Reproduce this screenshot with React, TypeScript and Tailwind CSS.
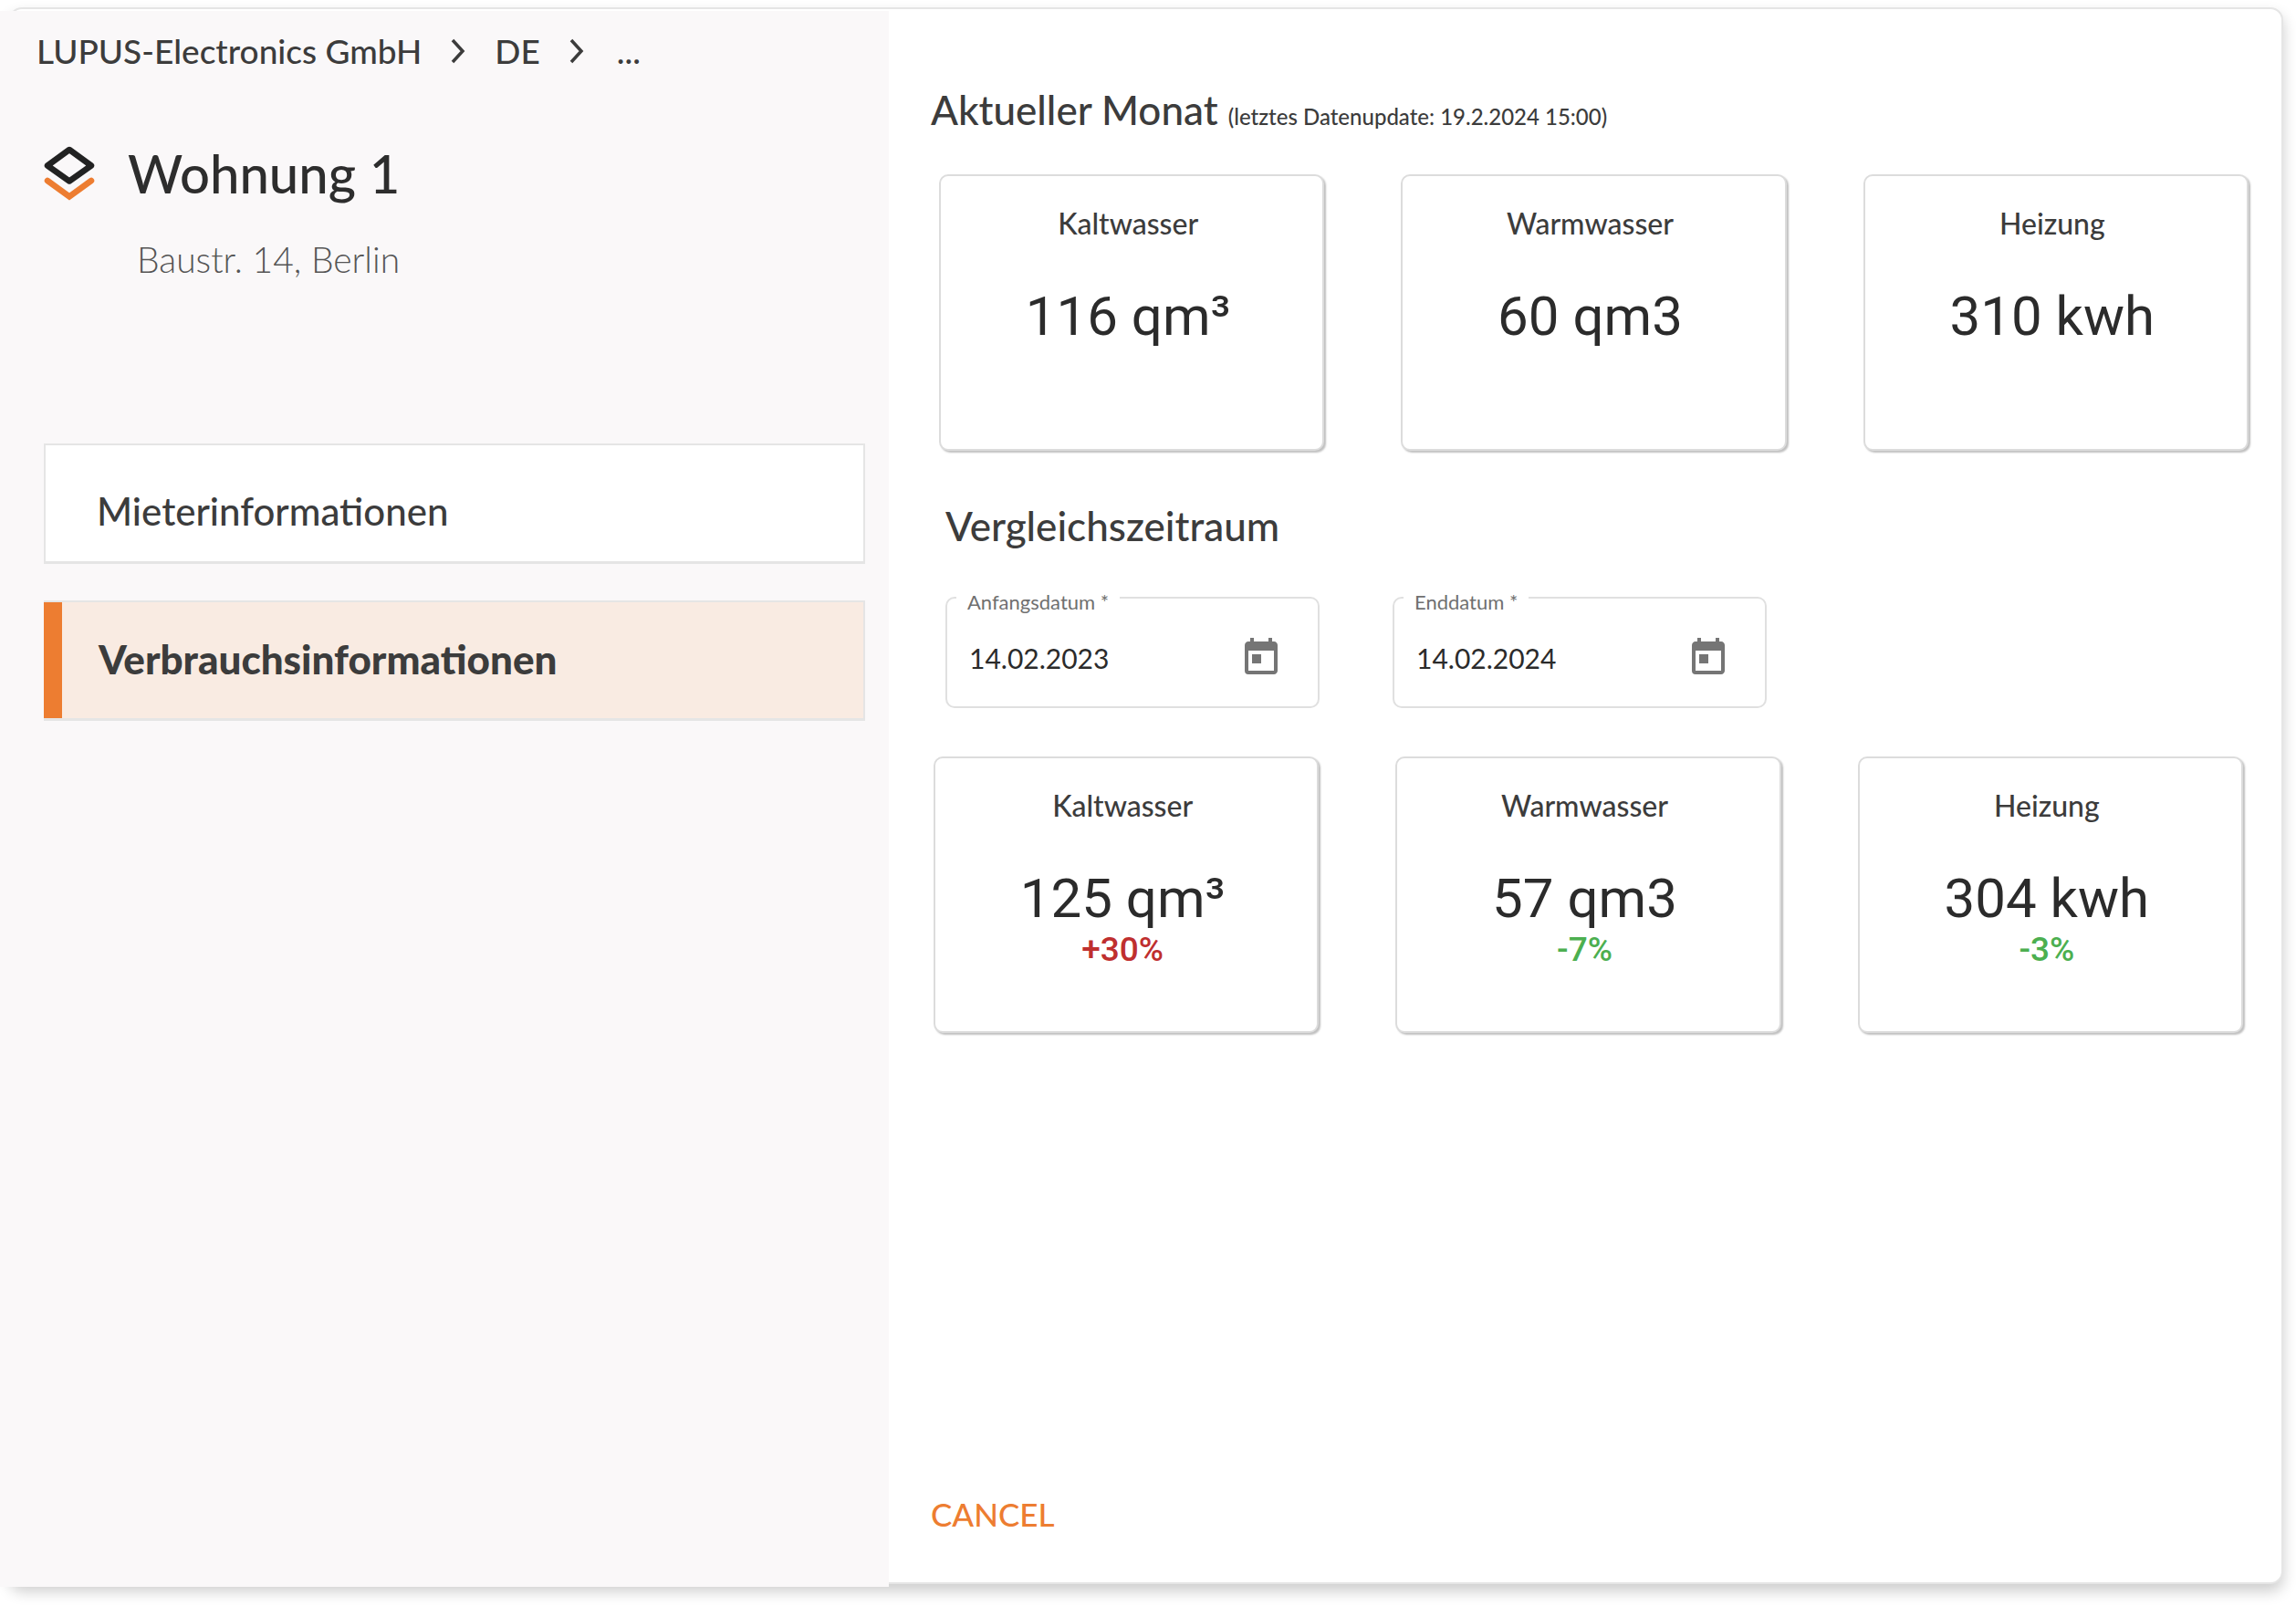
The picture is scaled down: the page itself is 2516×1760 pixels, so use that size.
import React from 'react';
import { MdToday } from 'react-icons/md';
import clsx from 'clsx';

interface Reading {
    label: string;
    value: string;
    delta?: string;
}

const currentMonth: Reading[] = [
    { label: 'Kaltwasser', value: '116 qm³' },
    { label: 'Warmwasser', value: '60 qm3' },
    { label: 'Heizung', value: '310 kwh' },
];

const comparison: Reading[] = [
    { label: 'Kaltwasser', value: '125 qm³', delta: '+30%' },
    { label: 'Warmwasser', value: '57 qm3', delta: '-7%' },
    { label: 'Heizung', value: '304 kwh', delta: '-3%' },
];

const Chevron = () => (
    <svg viewBox="0 0 16 28" className="h-7 w-4 flex-none" fill="none" stroke="#3c3c3c" strokeWidth="3.5" aria-hidden="true">
        <path d="M2 2 L13 14 L2 26" />
    </svg>
);

const UnitIcon = () => (
    <svg viewBox="0 0 56 60" className="h-[60px] w-14 flex-none" fill="none" strokeWidth="6.5" aria-hidden="true">
        <path d="M28 4 L52 21.5 L28 38.5 L4 21.5 Z" stroke="#222222" strokeLinejoin="round" />
        <path d="M4 38 L28 55.5 L52 38" stroke="#ed7d31" strokeLinecap="round" />
    </svg>
);

const NavItem = ({ label, active }: { label: string; active?: boolean }) => (
    <a
        href="#"
        className={clsx(
            'flex h-[132px] items-center border-2 border-b-[3px] border-[#e5e5e5] leading-[56px] text-[#3c3c3c]',
            active ? 'border-l-0 bg-[#f9ebe2] text-[44px] font-black' : 'bg-white pt-4 pl-14 text-[42px] font-medium'
        )}
    >
        {active && <span className="mr-10 w-5 self-stretch bg-[#ed7d31]" />}
        <span className={clsx(active && 'pb-1')}>{label}</span>
    </a>
);

const ReadingCard = ({ label, value, delta }: Reading) => (
    <div className="flex h-[303px] flex-col items-center rounded-[10px] border-2 border-[#dcdcdc] bg-white pt-8 pr-2 shadow-[2px_2px_2px_rgba(0,0,0,0.25)]">
        <h3 className="text-[32px] leading-10 font-medium text-[#3c3c3c]">{label}</h3>
        <p className="mt-[46px] font-[Roboto] text-[60px] leading-[72px] font-normal text-[#2b2b2b]">{value}</p>
        {delta && (
            <p className={clsx('font-[Roboto] text-[37px] leading-10 font-medium', delta.startsWith('+') ? 'text-[#bf2f2f]' : 'text-[#4caf50]')}>
                {delta}
            </p>
        )}
    </div>
);

const DateField = ({ id, label, value }: { id: string; label: string; value: string }) => (
    <div className="relative flex h-[122px] w-[410px] items-center rounded-[10px] border-2 border-[#e0e0e0] pt-3 pr-[38px] pl-6">
        <label htmlFor={id} className="absolute -top-[10px] left-[10px] bg-white px-3 text-[22px] leading-7 text-[#707070]">
            {label} *
        </label>
        <input id={id} defaultValue={value} className="min-w-0 flex-1 bg-transparent text-[30px] leading-10 text-[#2b2b2b] outline-none" />
        <button type="button" aria-label={`${label} wählen`} className="text-[#757575]">
            <MdToday size={48} />
        </button>
    </div>
);

export default function App() {
    return (
        <div className="flex min-h-screen bg-white pt-2 pr-[14px] pb-6 pl-[10px] font-[Lato,sans-serif]">
            <div className="grid flex-1 grid-cols-[481fr_763fr] rounded-[14px] border-2 border-[#e5e5e5] bg-white shadow-[0_8px_16px_rgba(0,0,0,0.2)]">
                <aside className="mt-[2px] -mb-[5px] -ml-3 bg-[#faf8f9] pt-5 pr-[26px] pl-12">
                    <nav aria-label="Breadcrumb" className="-ml-2 flex items-center text-[37px] leading-[48px] font-medium text-[#3c3c3c]">
                        <a href="#" className="mr-8">LUPUS-Electronics GmbH</a>
                        <Chevron />
                        <a href="#" className="mx-8">DE</a>
                        <Chevron />
                        <a href="#" className="ml-9">...</a>
                    </nav>

                    <div className="mt-[74px] flex items-center gap-9">
                        <UnitIcon />
                        <h1 className="text-[58px] leading-[72px] font-medium text-[#2d2d2d]">Wohnung 1</h1>
                    </div>
                    <p className="mt-[34px] pl-[102px] text-[39px] leading-[48px] font-light text-[#555555]">Baustr. 14, Berlin</p>

                    <nav aria-label="Bereiche" className="mt-[178px] flex flex-col gap-10">
                        <NavItem label="Mieterinformationen" />
                        <NavItem label="Verbrauchsinformationen" active />
                    </nav>
                </aside>

                <main className="flex flex-col pt-[82px] pr-9 pb-[51px] pl-[46px]">
                    <h2 className="text-[44px] leading-[56px] font-medium text-[#3c3c3c]">
                        Aktueller Monat <span className="text-[24px] leading-none">(letztes Datenupdate: 19.2.2024 15:00)</span>
                    </h2>
                    <div className="mt-[43px] ml-[9px] grid grid-cols-3 gap-[84px]">
                        {currentMonth.map((r) => <ReadingCard key={r.label} {...r} />)}
                    </div>

                    <h2 className="mt-[54px] ml-4 text-[44px] leading-[56px] font-medium text-[#3c3c3c]">Vergleichszeitraum</h2>
                    <div className="mt-[50px] ml-4 flex gap-20">
                        <DateField id="start" label="Anfangsdatum" value="14.02.2023" />
                        <DateField id="end" label="Enddatum" value="14.02.2024" />
                    </div>
                    <div className="mt-[53px] mr-[6px] ml-[3px] grid grid-cols-3 gap-[84px]">
                        {comparison.map((r) => <ReadingCard key={r.label} {...r} />)}
                    </div>

                    <button type="button" className="mt-auto self-start text-[35px] leading-[48px] font-medium text-[#ed7d31]">CANCEL</button>
                </main>
            </div>
        </div>
    );
}
